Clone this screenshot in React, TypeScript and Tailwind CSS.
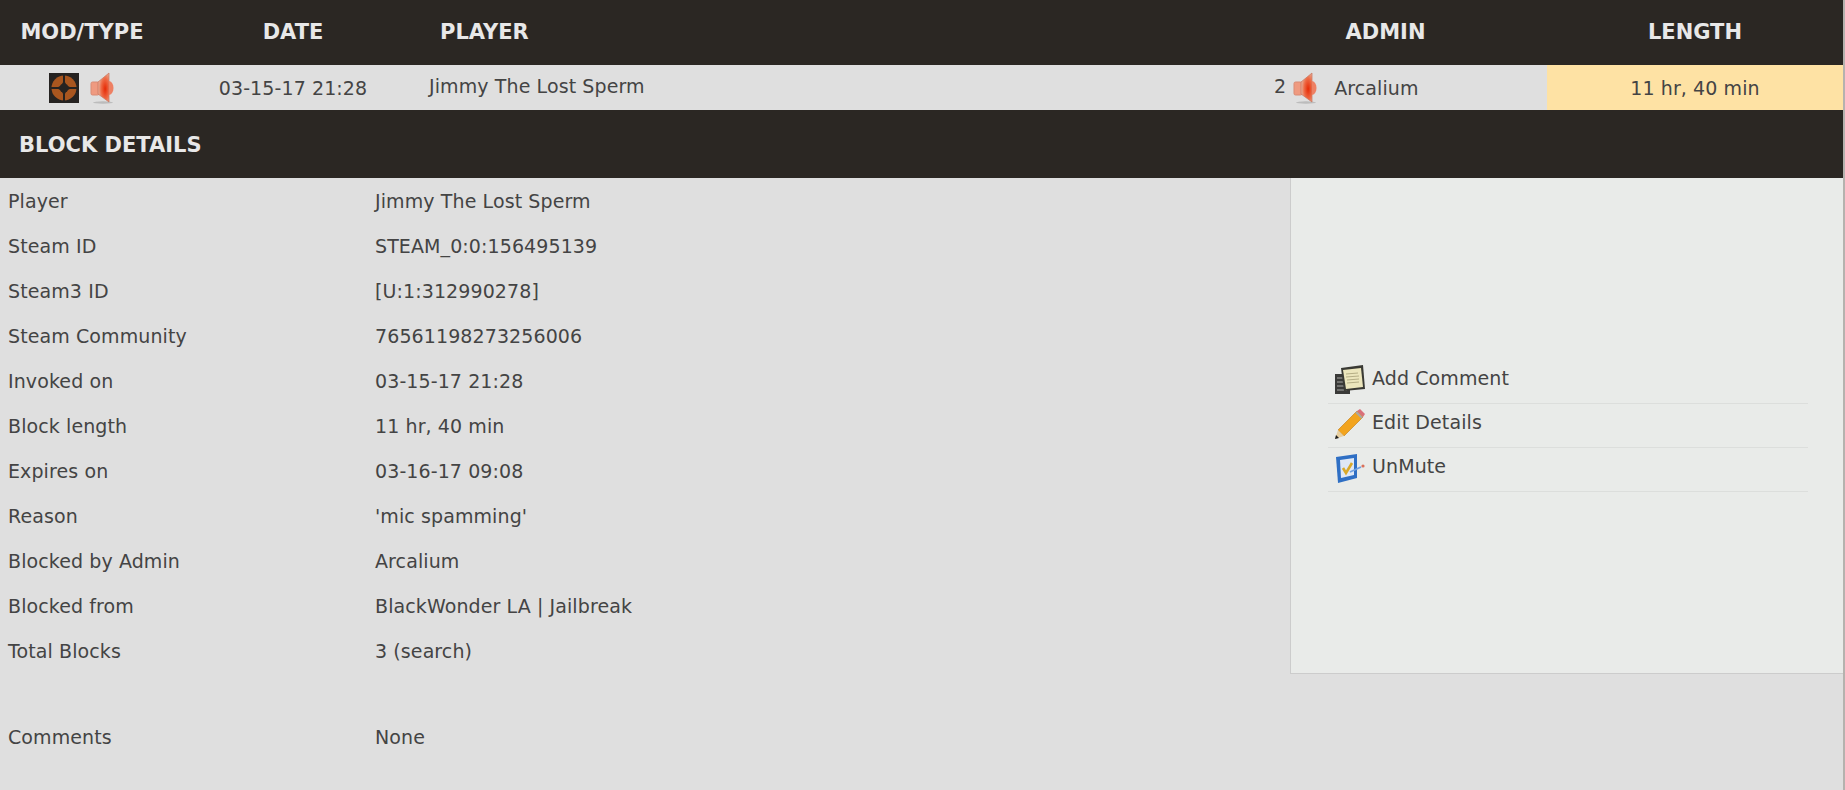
import React from "react";

const FONT = "font-['DejaVu_Sans',sans-serif]";

function TfIcon() {
    return (
        <svg width="30" height="30" viewBox="0 0 30 30">
            <rect width="30" height="30" fill="#262321" />
            <circle cx="15" cy="15" r="12.5" fill="#a9561f" />
            <path d="M15 1v28M1 15h28" stroke="#262321" strokeWidth="2" />
            <path d="M15 7l2.6 5.4L23 15l-5.4 2.6L15 23l-2.6-5.4L7 15l5.4-2.6z" fill="#262321" />
            <circle cx="15" cy="15" r="4.5" fill="#262321" />
        </svg>
    );
}

function SpeakerIcon() {
    return (
        <svg width="25" height="32" viewBox="0 0 25 32">
            <defs>
                <radialGradient id="spk" cx="0.65" cy="0.55" r="0.6">
                    <stop offset="0" stopColor="#e62a05" />
                    <stop offset="0.6" stopColor="#ee6a45" />
                    <stop offset="1" stopColor="#e8a890" />
                </radialGradient>
            </defs>
            <ellipse cx="13" cy="30.5" rx="10" ry="1.2" fill="#9a9a9a" opacity="0.5" />
            <rect x="1" y="10" width="8" height="13" rx="1.5" fill="#ef9a80" stroke="#d98b75" />
            <path d="M8 10L19 1v29L8 22z" fill="url(#spk)" stroke="#c9745c" strokeWidth="0.7" />
            <path d="M19 9c6 1 6 13 0 14z" fill="#ee8063" />
        </svg>
    );
}

function NoteIcon() {
    return (
        <svg width="30" height="30" viewBox="0 0 30 30">
            <rect x="0" y="9" width="15" height="20" fill="#3a3a38" />
            <path d="M2 13h10M2 17h10M2 21h10M2 25h10" stroke="#a9a9a5" strokeWidth="1" />
            <path d="M6 3L28 0l2 24-21 2z" fill="#3a3a34" />
            <path d="M8 5l18-2 2 19-17 2z" fill="#ece6bc" />
            <path d="M11 9l12-1M11 12l13-1M12 15l12-1M12 18l12-1" stroke="#b5ae85" strokeWidth="1" />
        </svg>
    );
}

function PencilIcon() {
    return (
        <svg width="30" height="30" viewBox="0 0 30 30">
            <path d="M22 2l6 6L9 27l-6-6z" fill="#f2a41e" stroke="#c07a12" strokeWidth="0.6" />
            <path d="M3 21l6 6-9 3z" fill="#e8cfa0" />
            <path d="M0 30l1-4 3 3z" fill="#1c1c1c" />
            <path d="M22 2l3-2 5 5-2 3z" fill="#d9707a" />
            <path d="M21 3l6 6" stroke="#a8a8a8" strokeWidth="2" />
        </svg>
    );
}

function CheckIcon() {
    return (
        <svg width="30" height="30" viewBox="0 0 30 30">
            <path d="M1 4l21-3v24L3 30z" fill="#2f6fc4" />
            <path d="M5 7l14-2v17L6 25z" fill="#dfe8f5" />
            <path d="M8 15l3 5 6-10" fill="none" stroke="#d9a92a" strokeWidth="2.6" />
            <path d="M15 19l11-5" stroke="#6f9fe0" strokeWidth="1.8" />
            <circle cx="28" cy="13" r="1.6" fill="#d9705a" />
        </svg>
    );
}

const details = [
    ["Player", "Jimmy The Lost Sperm"],
    ["Steam ID", "STEAM_0:0:156495139"],
    ["Steam3 ID", "[U:1:312990278]"],
    ["Steam Community", "76561198273256006"],
    ["Invoked on", "03-15-17 21:28"],
    ["Block length", "11 hr, 40 min"],
    ["Expires on", "03-16-17 09:08"],
    ["Reason", "'mic spamming'"],
    ["Blocked by Admin", "Arcalium"],
    ["Blocked from", "BlackWonder LA | Jailbreak"],
    ["Total Blocks", "3 (search)"],
];

export default function App() {
    return (
        <div className={`${FONT} min-h-[790px] bg-[#dfdfdf] text-[19px] tracking-[0.1px] text-[#444444] border-r-2 border-[#b5b2ae]`}>
            <div className="flex h-[65px] items-center bg-[#2b2723] pt-[1px] text-[21px] font-bold tracking-normal text-[#e8e8e8]">
                <div className="w-[164px] text-center">MOD/TYPE</div>
                <div className="w-[258px] text-center">DATE</div>
                <div className="flex-1 pl-[18px]">PLAYER</div>
                <div className="w-[323px] text-center">ADMIN</div>
                <div className="w-[296px] text-center">LENGTH</div>
            </div>

            <div className="flex h-[45px] items-center">
                <div className="flex w-[164px] items-center justify-center gap-[11px]">
                    <TfIcon />
                    <SpeakerIcon />
                </div>
                <div className="w-[258px] pt-[2px] text-center">03-15-17 21:28</div>
                <div className="flex-1 pb-[2px] pl-[7px]">Jimmy The Lost Sperm</div>
                <div className="flex w-[273px] items-center">
                    <span className="pb-[2px]">2</span>
                    <span className="ml-[7px]">
                        <SpeakerIcon />
                    </span>
                    <span className="ml-[16px] pt-[2px]">Arcalium</span>
                </div>
                <div className="flex h-full w-[296px] items-center justify-center bg-[#fee2a4] pt-[1px]">
                    11 hr, 40 min
                </div>
            </div>

            <div className="flex h-[68px] items-center bg-[#2b2723] pl-[19px] pt-[3px] text-[21px] font-bold tracking-normal text-[#e8e8e8]">
                BLOCK DETAILS
            </div>

            <div className="flex items-start">
                <div className="flex-1">
                    {details.map(([label, value]) => (
                        <div key={label} className="flex h-[45px] items-center pl-[8px] pt-[2px]">
                            <div className="w-[367px]">{label}</div>
                            <div>{value}</div>
                        </div>
                    ))}
                    <div className="mt-[41px] flex h-[45px] items-center pl-[8px] pt-[2px]">
                        <div className="w-[367px]">Comments</div>
                        <div>None</div>
                    </div>
                </div>

                <div className="flex h-[496px] w-[553px] flex-col justify-center border-b border-l border-[#cccccc] bg-[#e9ebe9] pl-[37px] pr-[35px]">
                    <div className="flex h-[44px] items-center gap-[7px] border-b border-[#dcdedc] pb-[2px] pl-[7px]">
                        <NoteIcon />
                        <span className="pb-[3px]">Add Comment</span>
                    </div>
                    <div className="flex h-[44px] items-center gap-[7px] border-b border-[#dcdedc] pb-[2px] pl-[7px]">
                        <PencilIcon />
                        <span className="pb-[3px]">Edit Details</span>
                    </div>
                    <div className="flex h-[44px] items-center gap-[7px] border-b border-[#dcdedc] pb-[2px] pl-[7px]">
                        <CheckIcon />
                        <span className="pb-[3px]">UnMute</span>
                    </div>
                </div>
            </div>
        </div>
    );
}
